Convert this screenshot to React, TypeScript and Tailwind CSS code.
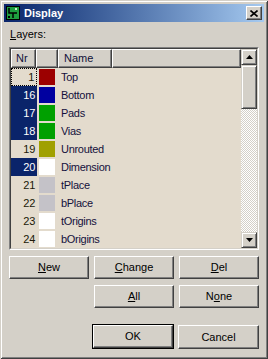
import React from 'react';

type Layer = { nr: number; name: string; color: string; selected?: boolean; focused?: boolean };

const layers: Layer[] = [
  { nr: 1, name: 'Top', color: '#9c0000', focused: true },
  { nr: 16, name: 'Bottom', color: '#0000a0', selected: true },
  { nr: 17, name: 'Pads', color: '#00a000', selected: true },
  { nr: 18, name: 'Vias', color: '#00a000', selected: true },
  { nr: 19, name: 'Unrouted', color: '#a0a000' },
  { nr: 20, name: 'Dimension', color: '#ffffff', selected: true },
  { nr: 21, name: 'tPlace', color: '#c4c2c8' },
  { nr: 22, name: 'bPlace', color: '#c4c2c8' },
  { nr: 23, name: 'tOrigins', color: '#ffffff' },
  { nr: 24, name: 'bOrigins', color: '#ffffff' },
];

const raised =
  'border border-t-white border-l-white border-r-[#404040] border-b-[#404040] shadow-[inset_-1px_-1px_0_#808080] bg-[#d4d0c8]';

function Btn({ children, className = '' }: { children: React.ReactNode; className?: string }) {
  return (
    <div className={`${raised} h-[23px] w-[80px] flex items-center justify-center text-[11px] text-black ${className}`}>
      {children}
    </div>
  );
}

function Arrow({ up }: { up?: boolean }) {
  return (
    <svg width="7" height="4" viewBox="0 0 7 4">
      {up ? <polygon points="3.5,0 7,4 0,4" fill="#000" /> : <polygon points="0,0 7,0 3.5,4" fill="#000" />}
    </svg>
  );
}

export default function App() {
  return (
    <div
      className="w-[268px] h-[359px] bg-[#d4d0c8] p-[4px] flex flex-col shadow-[inset_1px_1px_0_#d4d0c8,inset_-1px_-1px_0_#404040,inset_2px_2px_0_#fff,inset_-2px_-2px_0_#808080]"
      style={{ fontFamily: '"Liberation Sans", Arial, sans-serif' }}
    >
      {/* title bar */}
      <div className="h-[18px] flex items-center bg-gradient-to-r from-[#0a246a] to-[#a6caf0] pl-[2px] pr-[2px]">
        <svg width="14" height="14" viewBox="0 0 14 14">
          <rect x="0.5" y="0.5" width="13" height="13" fill="#1e9e3e" stroke="#000" />
          <path d="M3 2v5h4v5M7 7h4" stroke="#000" strokeWidth="1.5" fill="none" />
          <rect x="9" y="2" width="2" height="2" fill="#c8f0c8" />
          <rect x="2" y="10" width="2" height="2" fill="#000" />
        </svg>
        <span className="ml-[4px] text-[11px] font-bold text-white leading-none">Display</span>
        <div className={`${raised} ml-auto w-[16px] h-[14px] flex items-center justify-center`}>
          <svg width="8" height="7" viewBox="0 0 8 7">
            <path d="M0.5 0.5L7.5 6.5M7.5 0.5L0.5 6.5" stroke="#000" strokeWidth="1.6" />
          </svg>
        </div>
      </div>

      <div className="px-[5px] flex flex-col">
        <div className="mt-[6px] h-[13px] leading-[13px] text-[11px] text-black pl-[1px]">
          <span className="underline">L</span>ayers:
        </div>

        {/* list */}
        <div className="mt-[6px] h-[203px] border border-t-[#808080] border-l-[#808080] border-r-white border-b-white">
          <div className="h-full border border-t-[#404040] border-l-[#404040] border-r-[#d4d0c8] border-b-[#d4d0c8] bg-[#e3dbcd] flex">
            <div className="flex-1 flex flex-col">
              <div className="h-[19px] flex text-[11px] text-[#101038]">
                <div className={`${raised} w-[25px] flex items-center pl-[4px]`}>Nr</div>
                <div className={`${raised} w-[22px]`} />
                <div className={`${raised} w-[54px] flex items-center pl-[5px]`}>Name</div>
                <div className={`${raised} flex-1`} />
              </div>
              {layers.map(l => (
                <div key={l.nr} className="h-[18px] flex items-center text-[11px] tracking-[-0.3px]">
                  <div
                    className={`w-[26px] h-[18px] flex items-center justify-end pr-[2px] ${
                      l.selected ? 'bg-[#0a246a] text-white' : 'text-[#201808]'
                    } ${l.focused ? 'border border-dotted border-black' : ''}`}
                  >
                    {l.nr}
                  </div>
                  <div className="ml-[2px] w-[16px] h-[16px]" style={{ backgroundColor: l.color }} />
                  <div className="ml-[6px] text-[#14103c]">{l.name}</div>
                </div>
              ))}
            </div>
            {/* scrollbar */}
            <div className="w-[16px] flex flex-col">
              <div className="h-[16px] border border-t-[#d4d0c8] border-l-[#d4d0c8] border-r-[#404040] border-b-[#404040] shadow-[inset_1px_1px_0_#fff,inset_-1px_-1px_0_#808080] bg-[#d4d0c8] flex items-center justify-center">
                <Arrow up />
              </div>
              <div className="h-[44px] border border-t-[#d4d0c8] border-l-[#d4d0c8] border-r-[#404040] border-b-[#404040] shadow-[inset_1px_1px_0_#fff,inset_-1px_-1px_0_#808080] bg-[#d4d0c8]" />
              <div className="flex-1 bg-[repeating-conic-gradient(#fff_0_25%,#d4d0c8_0_50%)] bg-[length:2px_2px]" />
              <div className="h-[16px] border border-t-[#d4d0c8] border-l-[#d4d0c8] border-r-[#404040] border-b-[#404040] shadow-[inset_1px_1px_0_#fff,inset_-1px_-1px_0_#808080] bg-[#d4d0c8] flex items-center justify-center">
                <Arrow />
              </div>
            </div>
          </div>
        </div>

        {/* buttons */}
        <div className="mt-[6px] flex gap-[5px]">
          <Btn><span><span className="underline">N</span>ew</span></Btn>
          <Btn><span><span className="underline">C</span>hange</span></Btn>
          <Btn><span><span className="underline">D</span>el</span></Btn>
        </div>
        <div className="mt-[6px] flex gap-[5px] justify-end">
          <Btn><span><span className="underline">A</span>ll</span></Btn>
          <Btn><span>N<span className="underline">o</span>ne</span></Btn>
        </div>
        <div className="mt-[16px] flex gap-[4px] justify-end items-start">
          <div className="w-[82px] h-[25px] border border-black">
            <div className={`${raised} h-full flex items-center justify-center text-[11px] text-black`}>OK</div>
          </div>
          <Btn className="w-[81px] h-[24px] mt-[1px]">Cancel</Btn>
        </div>
      </div>
    </div>
  );
}
